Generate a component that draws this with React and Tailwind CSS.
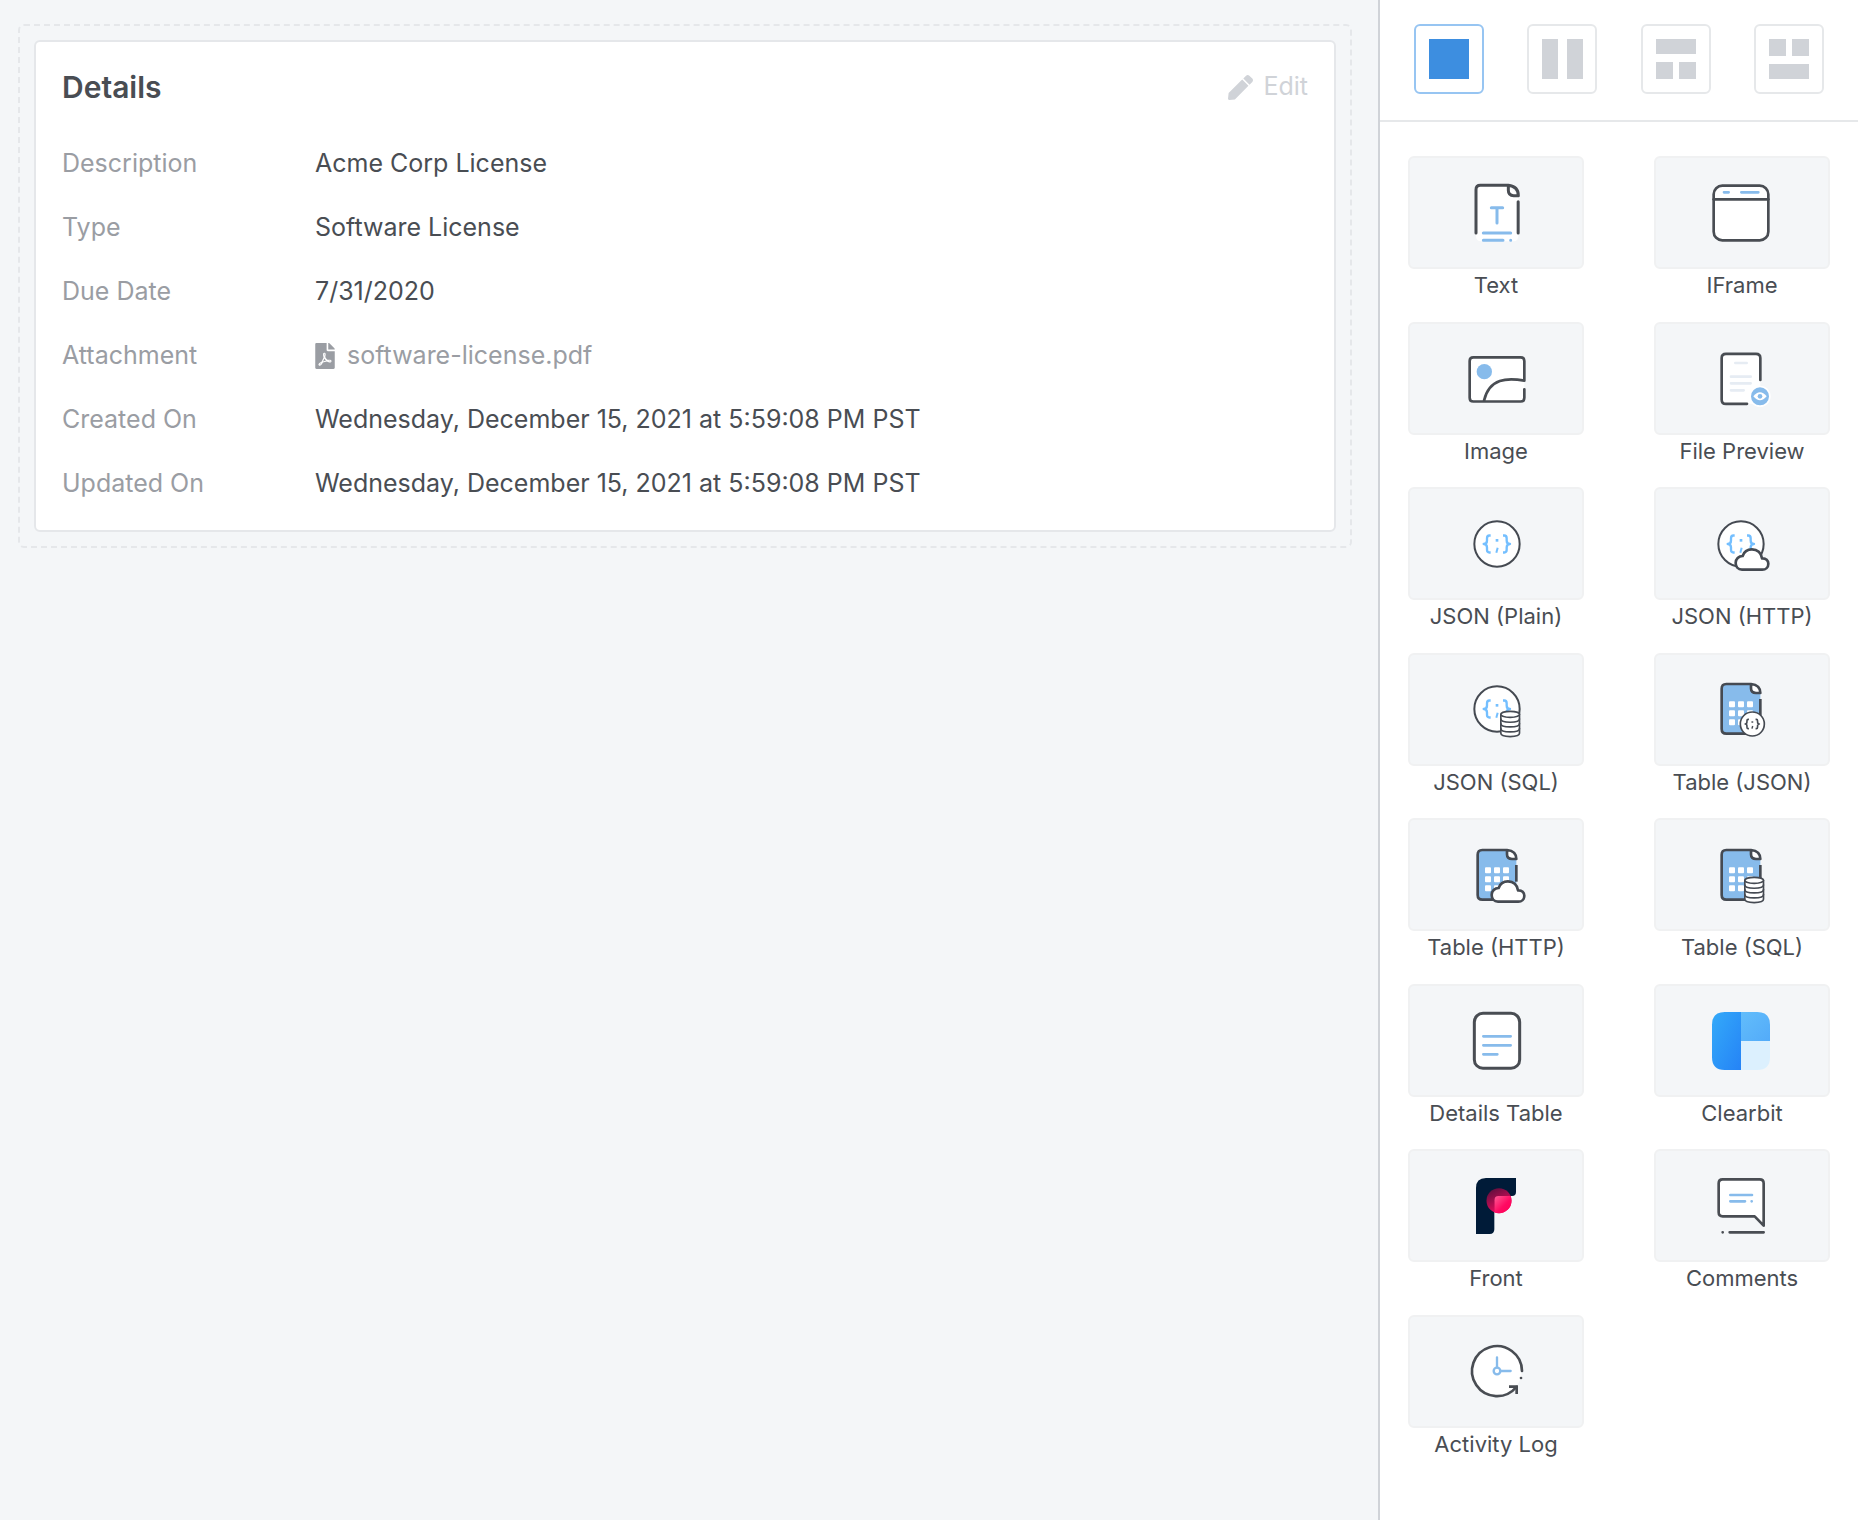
import { FaFilePdf, FaPen } from "react-icons/fa";

const INK = "#494d53";
const SKY = "#87bbeb";

const details = [
  ["Description", "Acme Corp License"],
  ["Type", "Software License"],
  ["Due Date", "7/31/2020"],
  ["Attachment", "software-license.pdf", true],
  ["Created On", "Wednesday, December 15, 2021 at 5:59:08 PM PST"],
  ["Updated On", "Wednesday, December 15, 2021 at 5:59:08 PM PST"],
];

function Icon({ children }) {
  return (
    <svg
      viewBox="0 0 180 180"
      className="size-15 overflow-visible"
      fill="none"
      strokeLinecap="round"
      strokeLinejoin="round"
      aria-hidden="true"
    >
      {children}
    </svg>
  );
}

/* Shared icon parts */

function Braces({ color, width = 7 }) {
  return (
    <g stroke={color} strokeWidth={width} strokeLinecap="butt">
      <path d="M74 64.500h-4q-7 0-7 8v7q0 10.500-10 10.500q10 0 10 10.500v7q0 8 7 8h4" />
      <path d="M111 64.500h4q7 0 7 8v7q0 10.500 10 10.500q-10 0-10 10.500v7q0 8-7 8h-4" />
      <path d="M93 75v8" strokeWidth={width + 1} />
      <path d="M95 101l-4 15" strokeWidth={width - 1} />
    </g>
  );
}

function JsonDisc() {
  return (
    <>
      <circle cx="93" cy="90" r="68" fill="#fff" stroke="#454a52" strokeWidth="6" />
      <Braces color="#74bfff" />
    </>
  );
}

function Cloud() {
  return (
    <path
      d="M90 167C78 167 71 158 71 147C71 135 80 126 92 126C96 113 107 106 120 106C136 106 148 117 150 133C162 132 169 140 169 149C169 160 161 167 151 167Z"
      fill="#fff"
      stroke="#454a52"
      strokeWidth="8"
    />
  );
}

function Database() {
  return (
    <g stroke="#454a52" strokeWidth="5">
      <path d="M104.500 106V163C104.500 176 160.500 176 160.500 163V106Z" fill="#fff" />
      <ellipse cx="132.500" cy="106" rx="28" ry="9" fill="#fff" />
      <path d="M104.500 120C104.500 133 160.500 133 160.500 120M104.500 134C104.500 147 160.500 147 160.500 134M104.500 149C104.500 162 160.500 162 160.500 149" />
    </g>
  );
}

function TableSheet() {
  return (
    <>
      <path d="M43 15H118L145 42V150Q145 164 131 164H43Q29 164 29 150V29Q29 15 43 15Z" fill={SKY} />
      <path d="M117 15C135 17 145 26 145 42H132Q117 42 117 28Z" fill="#fff" />
      <g stroke="#454a52" strokeWidth="8">
        <path d="M110 164H43Q29 164 29 150V29Q29 15 43 15H117C135 17 145 26 145 42H132Q117 42 117 28V15" />
        <path d="M145 60V110" strokeLinecap="butt" />
      </g>
      {[67, 94, 121].map((y) =>
        [51, 78, 105].map((x) => (
          <rect key={`${x}-${y}`} x={x} y={y} width="18" height="18" rx="3" fill="#fff" />
        ))
      )}
    </>
  );
}

/* Component icons */

const TextIcon = () => (
  <Icon>
    <path d="M30 20Q30 7 43 7H128L157 38V160Q157 175 142 175H45Q30 175 30 160Z" fill="#fff" />
    <g stroke={INK} strokeWidth="9">
      <path d="M30 150V20Q30 7 43 7H127C146 9 157 20 157 38H143Q127 38 127 22V9" />
      <path d="M156.500 56V150" />
    </g>
    <g stroke={SKY} strokeWidth="9">
      <path d="M76 74H110M93 74V120M52 150H134M52 172H111M134 172h.1" />
    </g>
  </Icon>
);

const IFrameIcon = () => (
  <Icon>
    <rect x="5" y="8" width="164" height="164" rx="26" fill="#fff" stroke={INK} strokeWidth="8" />
    <path d="M5 49H169" stroke={INK} strokeWidth="8" />
    <path d="M36 28H50M88 28H139" stroke={SKY} strokeWidth="8" />
  </Icon>
);

const ImageIcon = () => (
  <Icon>
    <rect x="11" y="28" width="164" height="132" rx="11" fill="#fff" />
    <circle cx="55" cy="71" r="23" fill={SKY} />
    <g stroke={INK} strokeWidth="8">
      <path d="M175 124V149Q175 160.500 164 160.500H22Q11 160.500 11 149V39Q11 28 22 28H164Q175 28 175 39V98C124 89 70 90 54 158" />
    </g>
  </Icon>
);

const FilePreviewIcon = () => (
  <Icon>
    <rect x="29" y="17" width="116" height="150" rx="12" fill="#fff" />
    <path
      d="M105 167.500H42Q29 167.500 29 155V30Q29 17.500 42 17.500H132Q145 17.500 145 30V96"
      stroke={INK}
      strokeWidth="8"
    />
    <path d="M70 45H104M57 86H116M57 106H116M57 127H95" stroke="#e6ecf3" strokeWidth="8" />
    <circle cx="144" cy="145" r="32" fill="#fff" />
    <circle cx="144" cy="145" r="27" fill={SKY} />
    <path d="M124 145Q144 121 164 145Q144 169 124 145Z" fill="#fff" />
    <circle cx="144" cy="145" r="7" fill={SKY} />
  </Icon>
);

const JsonPlainIcon = () => (
  <Icon>
    <JsonDisc />
  </Icon>
);

const JsonHttpIcon = () => (
  <Icon>
    <g transform="translate(-6 0)">
      <JsonDisc />
    </g>
    <Cloud />
  </Icon>
);

const JsonSqlIcon = () => (
  <Icon>
    <JsonDisc />
    <Database />
  </Icon>
);

const TableJsonIcon = () => (
  <Icon>
    <TableSheet />
    <circle cx="121" cy="135" r="36" fill="#fff" stroke="#454a52" strokeWidth="5" />
    <g transform="translate(70.800 86.400) scale(.54)">
      <Braces color="#454a52" width={9} />
    </g>
  </Icon>
);

const TableHttpIcon = () => (
  <Icon>
    <g transform="translate(6 0)">
      <TableSheet />
      <g transform="translate(0 3)">
        <Cloud />
      </g>
    </g>
  </Icon>
);

const TableSqlIcon = () => (
  <Icon>
    <TableSheet />
    <g transform="translate(-6 0)">
      <Database />
    </g>
  </Icon>
);

const DetailsTableIcon = () => (
  <Icon>
    <rect x="25" y="10" width="136" height="165" rx="26" fill="#fff" stroke={INK} strokeWidth="9" />
    <path d="M52 79H134M52 106H134M52 133H94" stroke={SKY} strokeWidth="8" />
  </Icon>
);

const ClearbitIcon = () => (
  <Icon>
    <defs>
      <linearGradient id="cb-deep" x1="0" y1="0" x2="1" y2="1">
        <stop offset="0" stopColor="#34aaf9" />
        <stop offset="1" stopColor="#2583f6" />
      </linearGradient>
      <linearGradient id="cb-mid" x1="0" y1="0" x2="1" y2="1">
        <stop offset="0" stopColor="#62bdfb" />
        <stop offset="1" stopColor="#53abf9" />
      </linearGradient>
    </defs>
    <path d="M87 6V180H38Q0 180 0 142V44Q0 6 38 6Z" fill="url(#cb-deep)" />
    <path d="M87 6H136Q174 6 174 44V93H87Z" fill="url(#cb-mid)" />
    <path d="M87 93H174V142Q174 180 136 180H87Z" fill="#dcf0fe" />
  </Icon>
);

const FrontIcon = () => (
  <Icon>
    <defs>
      <linearGradient id="front-shade" x1=".2" y1="0" x2=".7" y2="1">
        <stop offset="0" stopColor="#5c0f3c" />
        <stop offset="1" stopColor="#ff0a62" />
      </linearGradient>
      <linearGradient id="front-glow" x1="0" y1="0" x2="1" y2="1">
        <stop offset=".3" stopColor="#ff5f98" />
        <stop offset=".7" stopColor="#ff0a62" />
        <stop offset="1" stopColor="#ff0057" />
      </linearGradient>
      <clipPath id="front-notch">
        <path d="M85 180V73Q85 60 98 60H180V180Z" />
      </clipPath>
    </defs>
    <path
      d="M30 36Q30 6 60 6H150V48Q150 60 138 60H98Q85 60 85 73V160Q85 174 71 174H30Z"
      fill="#001b38"
    />
    <circle cx="99" cy="74" r="37.500" fill="url(#front-shade)" />
    <circle cx="99" cy="74" r="37.500" fill="url(#front-glow)" clipPath="url(#front-notch)" />
  </Icon>
);

const CommentsIcon = () => (
  <Icon>
    <path
      d="M32 10H143Q155 10 155 22V149L128 121H32Q20 121 20 109V22Q20 10 32 10Z"
      fill="#fff"
      stroke={INK}
      strokeWidth="8"
    />
    <path d="M55 57H120M55 76H99M119 76h.1" stroke={SKY} strokeWidth="8" />
    <path d="M53 169H155M32 169h.1" stroke={INK} strokeWidth="8" />
  </Icon>
);

const ActivityIcon = () => (
  <Icon>
    <circle cx="93" cy="90" r="74" fill="#fff" />
    <g stroke={INK} strokeWidth="8">
      <path d="M168 90A75 75 0 1 0 151 138" />
      <path d="M165 111h.1" />
      <path d="M133 137H152V155" strokeLinecap="square" strokeLinejoin="miter" />
    </g>
    <g stroke={SKY} strokeWidth="7">
      <circle cx="93" cy="90" r="10" />
      <path d="M93 79V49M105 90H134" />
    </g>
  </Icon>
);

const components = [
  ["Text", TextIcon],
  ["IFrame", IFrameIcon],
  ["Image", ImageIcon],
  ["File Preview", FilePreviewIcon],
  ["JSON (Plain)", JsonPlainIcon],
  ["JSON (HTTP)", JsonHttpIcon],
  ["JSON (SQL)", JsonSqlIcon],
  ["Table (JSON)", TableJsonIcon],
  ["Table (HTTP)", TableHttpIcon],
  ["Table (SQL)", TableSqlIcon],
  ["Details Table", DetailsTableIcon],
  ["Clearbit", ClearbitIcon],
  ["Front", FrontIcon],
  ["Comments", CommentsIcon],
  ["Activity Log", ActivityIcon],
];

const layouts = [
  { name: "One column", path: "M0 0H40V40H0Z", active: true },
  { name: "Two columns", path: "M0 0H16V40H0ZM25 0H41V40H25Z" },
  { name: "Header with two columns", path: "M0 0H40V15H0ZM0 23H17V40H0ZM23 23H40V40H23Z" },
  { name: "Two columns with footer", path: "M0 0H17V17H0ZM23 0H40V17H23ZM0 25H40V40H0Z" },
];

function DetailsCard() {
  return (
    <section className="rounded-md border-2 border-[#e5e7ea] bg-white px-[26px] pb-[14px]">
      <header className="flex h-[90px] items-center justify-between">
        <h1 className="text-[30px] font-semibold">Details</h1>
        <button type="button" className="flex items-center gap-[10px] text-[#d0d3d8]">
          <FaPen className="size-[25px]" aria-hidden="true" />
          Edit
        </button>
      </header>
      <dl>
        {details.map(([label, value, isFile]) => (
          <div key={label} className="flex h-16 items-center">
            <dt className="w-[253px] shrink-0 text-[#9a9da3]">{label}</dt>
            <dd>
              {isFile ? (
                <a href="#attachment" className="flex items-center gap-3 text-[#9a9da3]">
                  <FaFilePdf className="h-[26px] w-5" aria-hidden="true" />
                  {value}
                </a>
              ) : (
                value
              )}
            </dd>
          </div>
        ))}
      </dl>
    </section>
  );
}

function Sidebar() {
  return (
    <aside className="flex w-[480px] shrink-0 flex-col border-l-2 border-[#d0d3d8] bg-white">
      <div className="flex justify-between border-b-2 border-[#e6e8ea] px-[34px] pt-6 pb-[26px]">
        {layouts.map(({ name, path, active }) => (
          <button
            key={name}
            type="button"
            aria-label={name}
            aria-pressed={Boolean(active)}
            className={
              active
                ? "flex size-[70px] items-center justify-center rounded-md border-2 border-[#97c5f2] text-[#3d8ee0]"
                : "flex size-[70px] items-center justify-center rounded-md border-2 border-[#e6e8ea] text-[#d0d3d8]"
            }
          >
            <svg viewBox="0 0 40 40" className="size-10 overflow-visible" fill="currentColor" aria-hidden="true">
              <path d={path} />
            </svg>
          </button>
        ))}
      </div>
      <div className="grid flex-1 grid-cols-2 content-between gap-x-[70px] px-7 pt-[34px] pb-[62px]">
        {components.map(([label, Glyph]) => (
          <button key={label} type="button" className="flex flex-col gap-0.5 text-[22px] leading-7">
            <span className="flex h-[113px] w-full items-center justify-center rounded-md border-2 border-[#f0f1f2] bg-[#f4f6f8]">
              <Glyph />
            </span>
            <span className="w-full text-center">{label}</span>
          </button>
        ))}
      </div>
    </aside>
  );
}

export default function App() {
  return (
    <div className="flex min-h-screen bg-[#f4f6f8] font-['Inter','Liberation_Sans',sans-serif] text-[25px] text-[#494d53]">
      <main className="min-w-0 flex-1 pt-6 pr-[26px] pl-[18px]">
        <div className="rounded-md border-2 border-dashed border-[#e5e7ea] p-[14px]">
          <DetailsCard />
        </div>
      </main>
      <Sidebar />
    </div>
  );
}
